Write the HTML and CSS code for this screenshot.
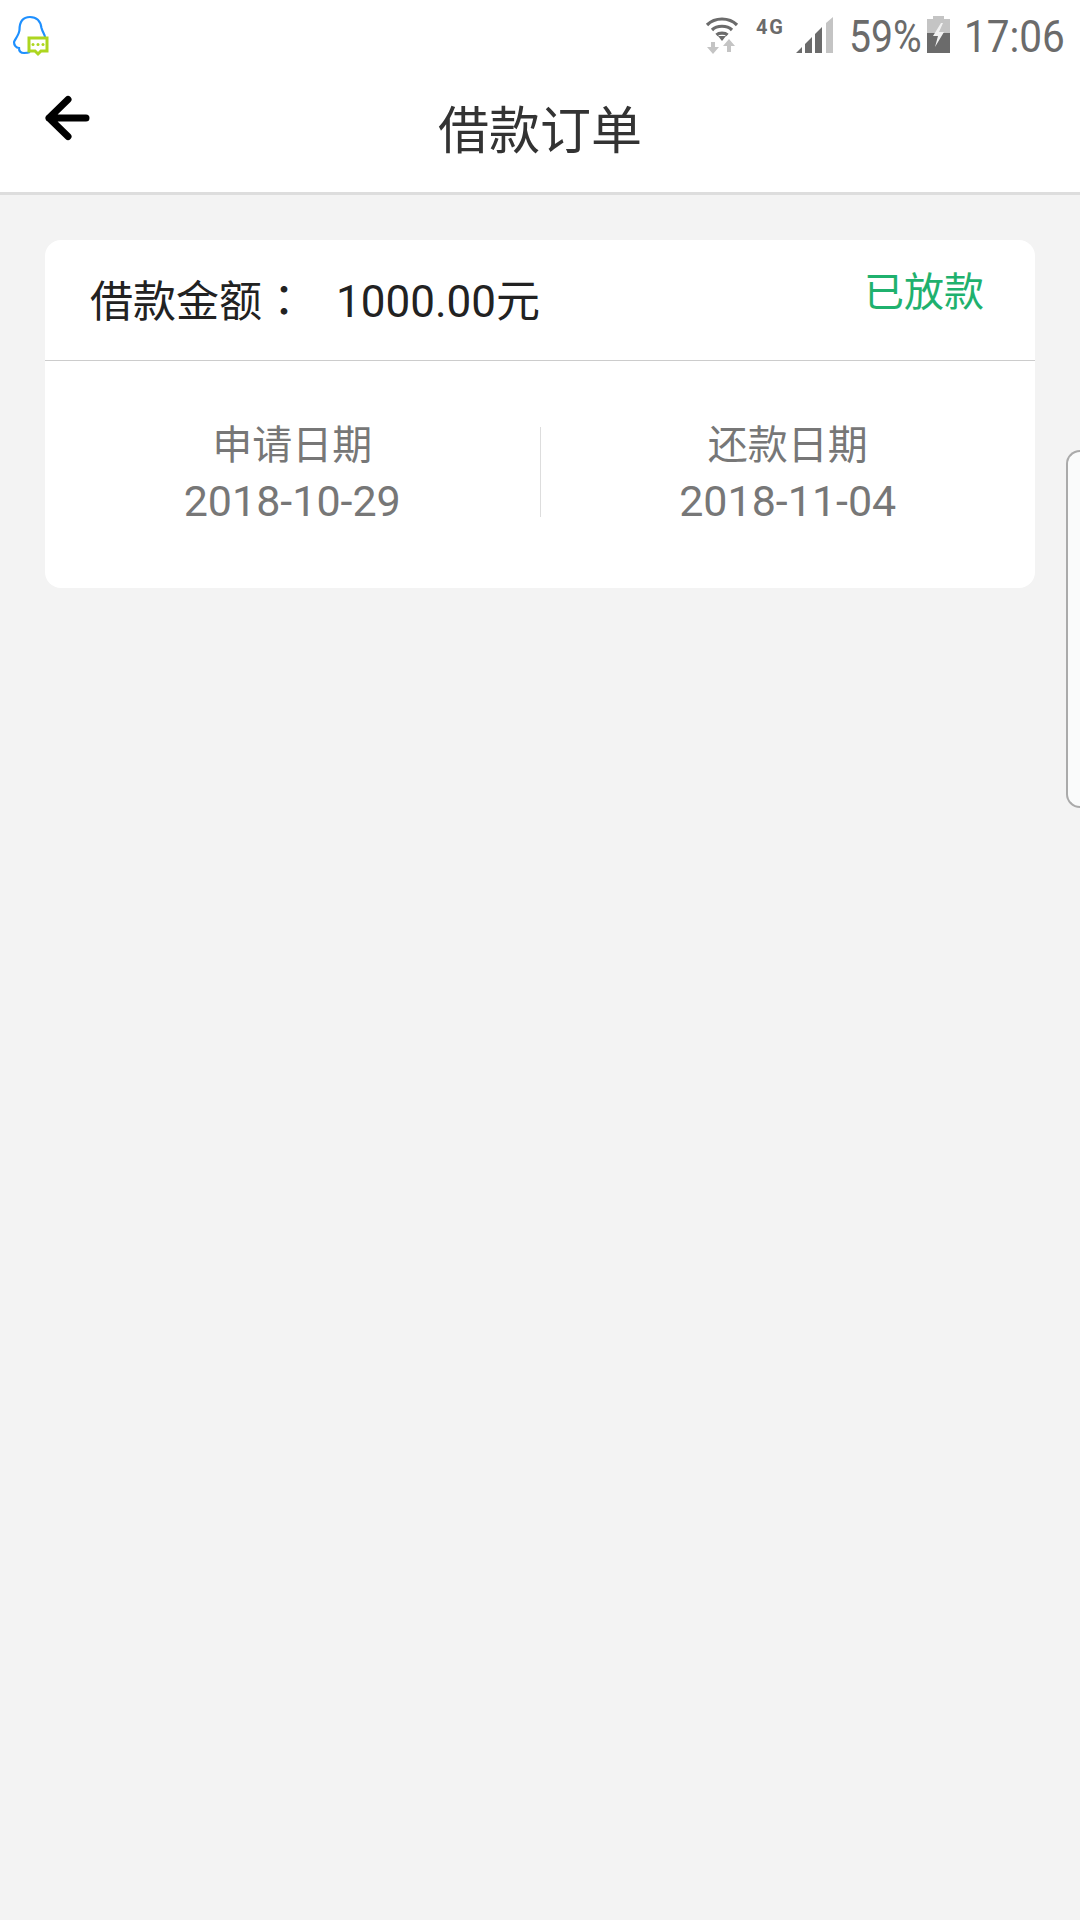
FILE: index.html
```html
<!DOCTYPE html>
<html lang="zh-CN">
<head>
    <meta charset="UTF-8">
    <meta name="viewport" content="width=device-width, initial-scale=1.0">
    <title>借款订单</title>
    <link rel="stylesheet" href="styles.css">
</head>
<body>
    <div class="status-bar">
        <svg class="qq-icon" width="50" height="44" viewBox="0 0 50 44">
            <path d="M19 2 C12 2 8.500 7 8.500 15 C8 20 4 24 3 27 C3 30 5 33 8 33 C8 36 10 38 13 38 C15 38 17 38 19 37 M19 2 C26 2 29.500 6 30.500 13 C31.500 17 34 20 34 22" fill="none" stroke="#1e90ff" stroke-width="2.200"/>
            <path d="M18 23 H36 V36 H30 L27 39 L24 36 H18 Z" fill="#fff" stroke="#add61f" stroke-width="3"/>
            <circle cx="22" cy="29.500" r="1.500" fill="#add61f"/>
            <circle cx="27" cy="29.500" r="1.500" fill="#add61f"/>
            <circle cx="32" cy="29.500" r="1.500" fill="#add61f"/>
        </svg>
        <div class="status-right">
            <svg class="wifi-icon" width="34" height="38" viewBox="0 0 34 38">
                <path d="M2 9 C10 1 24 1 32 9 M7 14 C12 9 22 9 27 14 M11.500 19 C14 16.500 20 16.500 22.500 19" fill="none" stroke="#6b6b6b" stroke-width="3.200"/>
                <path d="M17 25 L13 20 H21 Z" fill="#6b6b6b"/>
                <path d="M8 38 L2 31 H6 V26 H10 V31 H14 Z M24 23 L30 30 H26 V36 H22 V30 H18 Z" fill="#c4c4c4"/>
            </svg>
            <span class="net-label">4G</span>
            <svg class="signal-icon" width="37" height="37" viewBox="0 0 37 37">
                <path d="M0 36 L6 30 V36 Z M9 27 L16 20 V36 H9 Z M19 17 L26 10 V36 H19 Z" fill="#6b6b6b"/>
                <path d="M30 6 L37 0 V36 H30 Z" fill="#c4c4c4"/>
            </svg>
            <span class="status-text battery-level">59%</span>
            <svg class="battery-icon" width="23" height="37" viewBox="0 0 23 37">
                <path d="M6 0 H17 V3 H23 V17 H0 V3 H6 Z" fill="#c4c4c4"/>
                <rect y="17" width="23" height="20" fill="#6b6b6b"/>
                <path d="M14 7 L6 20 H11 L8 31 L17 16 H12 L16 7 Z" fill="#f2f2f2"/>
            </svg>
            <span class="status-text clock">17:06</span>
        </div>
    </div>

    <div class="title-bar">
        <svg class="back-icon" width="46" height="46" viewBox="0 0 46 46">
            <path d="M5 23 H42 M24 4.500 L5 23 L24 41.500" fill="none" stroke="#000" stroke-width="7" stroke-linecap="round" stroke-linejoin="round"/>
        </svg>
        <h1>借款订单</h1>
    </div>

    <div class="order-card">
        <div class="order-head">
            <div class="order-amount">
                <span class="amount-label">借款金额</span><span class="amount-colon" lang="zh-TW">：</span><span>1000.00元</span>
            </div>
            <div class="order-status">已放款</div>
        </div>
        <div class="order-dates">
            <div class="date-col">
                <div class="date-label">申请日期</div>
                <div class="date-value">2018-10-29</div>
            </div>
            <div class="date-sep"></div>
            <div class="date-col">
                <div class="date-label">还款日期</div>
                <div class="date-value">2018-11-04</div>
            </div>
        </div>
    </div>

    <div class="edge-panel"></div>
</body>
</html>
```

FILE: styles.css
```css
body {
    margin: 0;
    height: 1920px;
    overflow: hidden;
    position: relative;
    background: #f3f3f3;
    font-family: Roboto, "Noto Sans CJK SC", sans-serif;
}

.status-bar {
    height: 64px;
    background: #fff;
    display: flex;
    justify-content: space-between;
    padding: 0 17px 0 11px;
}

.qq-icon {
    margin-top: 15px;
}

.status-right {
    display: flex;
    align-items: flex-start;
}

.wifi-icon {
    margin-top: 16px;
    margin-right: 17px;
}

.net-label {
    font-size: 20px;
    font-weight: 700;
    letter-spacing: 2px;
    color: #6b6b6b;
    line-height: 20px;
    margin-top: 17px;
    margin-right: 11px;
}

.signal-icon {
    margin-top: 17px;
    margin-right: 16px;
}

/* no condensed face installed, so the digits get squeezed */
.status-text {
    font-size: 45px;
    line-height: 64px;
    margin-top: 5px;
    color: #6b6b6b;
    white-space: nowrap;
    transform: scaleX(0.87);
    transform-origin: left center;
}

.battery-level {
    width: 69px;
}

.clock {
    width: 99px;
    transform: scaleX(0.9);
}

.battery-icon {
    margin: 16px 14px 0 9px;
}

.title-bar {
    height: 128px;
    background: #fff;
    border-bottom: 3px solid #ddd;
    display: grid;
    grid-template-columns: 1fr auto 1fr;
    align-items: center;
}

.title-bar h1 {
    grid-column: 2;
    grid-row: 1;
    margin: 0 0 2px;
    font-size: 51px;
    font-weight: 400;
    color: #333;
}

.back-icon {
    grid-column: 1;
    grid-row: 1;
    margin: 0 0 20px 44px;
}

.order-card {
    margin: 45px 45px 0;
    height: 348px;
    background: #fff;
    border-radius: 16px;
    display: flex;
    flex-direction: column;
}

.order-head {
    height: 120px;
    border-bottom: 1px solid #ccc;
    display: flex;
    justify-content: space-between;
    padding: 0 51px 0 45px;
}

.order-amount {
    font-size: 44px;
    line-height: 116px;
    color: #222;
}

.amount-label {
    font-size: 43px;
}

.amount-colon {
    font-family: "Noto Sans CJK TC", sans-serif;
    margin: 0 30px 0 0;
}

.order-status {
    font-size: 40px;
    line-height: 106px;
    color: #1fb16e;
}

.order-dates {
    flex: 1;
    display: flex;
    align-items: center;
    padding-bottom: 5px;
}

.date-col {
    flex: 1;
    text-align: center;
    color: #777;
}

.date-label {
    font-size: 40px;
    line-height: 57px;
}

.date-value {
    font-size: 43px;
    line-height: 54px;
}

.date-sep {
    width: 1px;
    height: 90px;
    background: #ddd;
}

.edge-panel {
    position: absolute;
    top: 450px;
    right: 0;
    width: 12px;
    height: 354px;
    background: #fafbfb;
    border: 2px solid #aaa;
    border-right: none;
    border-radius: 18px 0 0 18px;
}
```
